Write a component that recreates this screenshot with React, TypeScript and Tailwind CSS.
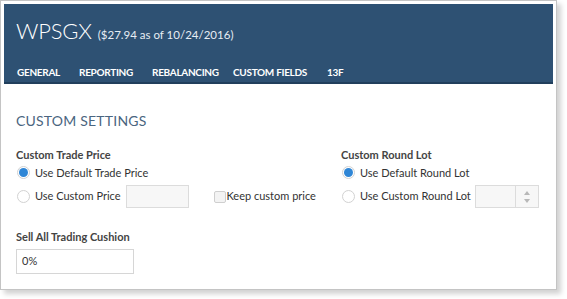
import React from 'react';

const font = { fontFamily: '"Lato", "Open Sans", sans-serif' };

function Radio({ checked }: { checked?: boolean }) {
  return (
    <span className="relative inline-flex h-[13px] w-[13px] shrink-0 items-center justify-center rounded-full border border-[#d2d2d2] bg-white">
      {checked && <span className="h-[9px] w-[9px] rounded-full bg-[#2f86d6]" />}
    </span>
  );
}

function Checkbox() {
  return <span className="inline-block h-[12px] w-[12px] shrink-0 rounded-[2px] border border-[#cfcfcf] bg-[#f3f3f3]" />;
}

export default function App() {
  const tabs = ['GENERAL', 'REPORTING', 'REBALANCING', 'CUSTOM FIELDS', '13F'];

  return (
    <div className="h-[299px] w-[567px] bg-white" style={font}>
      <div className="h-[290px] w-[557px] border border-[#c4c4c4] bg-white p-[3px] shadow-[4px_4px_5px_rgba(0,0,0,0.18)]">
        {/* Header */}
        <div className="flex h-[80px] w-[549px] flex-col border-b-2 border-[#213f5c] bg-[#2e5173] px-[12px]">
          <div className="mt-[10px] flex items-baseline">
            <span className="text-[22px] font-light tracking-[-0.2px] text-white">WPSGX</span>
            <span className="ml-[6px] text-[11.5px] text-[#e6edf4]">($27.94 as of 10/24/2016)</span>
          </div>
          <div className="mt-auto mb-[2px] flex pl-[1px]">
            {tabs.map((t, i) => (
              <span
                key={t}
                className={`text-[10px] font-bold tracking-[-0.3px] text-white ${i === 0 ? 'w-[62px]' : i === 1 ? 'w-[73px]' : i === 2 ? 'w-[81px]' : i === 3 ? 'w-[94px]' : ''}`}
              >
                {t}
              </span>
            ))}
          </div>
        </div>

        {/* Body */}
        <div className="px-[12px] pt-[26px] text-[11px] text-[#333]">
          <div className="text-[14px] tracking-[0.2px] text-[#4a6580]">CUSTOM SETTINGS</div>

          <div className="mt-[16px] flex">
            <div className="w-[325px]">
              <div className="font-bold text-[#444]">Custom Trade Price</div>
              <div className="mt-[1px] flex items-center gap-[5px] pl-[1px]">
                <Radio checked />
                <span>Use Default Trade Price</span>
              </div>
              <div className="mt-[4px] flex items-center">
                <div className="flex items-center gap-[5px] pl-[1px]">
                  <Radio />
                  <span>Use Custom Price</span>
                </div>
                <div className="ml-[5px] h-[23px] w-[63px] border border-[#dcdcdc] bg-[#f7f7f7]" />
                <div className="ml-[25px] flex items-center gap-[1px]">
                  <Checkbox />
                  <span>Keep custom price</span>
                </div>
              </div>
            </div>
            <div>
              <div className="font-bold text-[#444]">Custom Round Lot</div>
              <div className="mt-[1px] flex items-center gap-[5px] pl-[1px]">
                <Radio checked />
                <span>Use Default Round Lot</span>
              </div>
              <div className="mt-[4px] flex items-center">
                <div className="flex items-center gap-[5px] pl-[1px]">
                  <Radio />
                  <span className="whitespace-nowrap">Use Custom Round Lot</span>
                </div>
                <div className="ml-[4px] flex h-[23px] w-[64px] border border-[#dcdcdc] bg-[#f7f7f7]">
                  <div className="flex-1" />
                  <div className="flex w-[23px] flex-col items-center justify-center gap-[4px] border-l border-[#dcdcdc]">
                    <span className="h-0 w-0 border-x-[3px] border-b-[4px] border-x-transparent border-b-[#b8b8b8]" />
                    <span className="h-0 w-0 border-x-[3px] border-t-[4px] border-x-transparent border-t-[#b8b8b8]" />
                  </div>
                </div>
              </div>
            </div>
          </div>

          <div className="mt-[21px] font-bold text-[#444]">Sell All Trading Cushion</div>
          <div className="mt-[3px] flex h-[25px] w-[118px] items-center border border-[#d6d6d6] bg-white px-[5px]">
            0%
          </div>
        </div>
      </div>
    </div>
  );
}
